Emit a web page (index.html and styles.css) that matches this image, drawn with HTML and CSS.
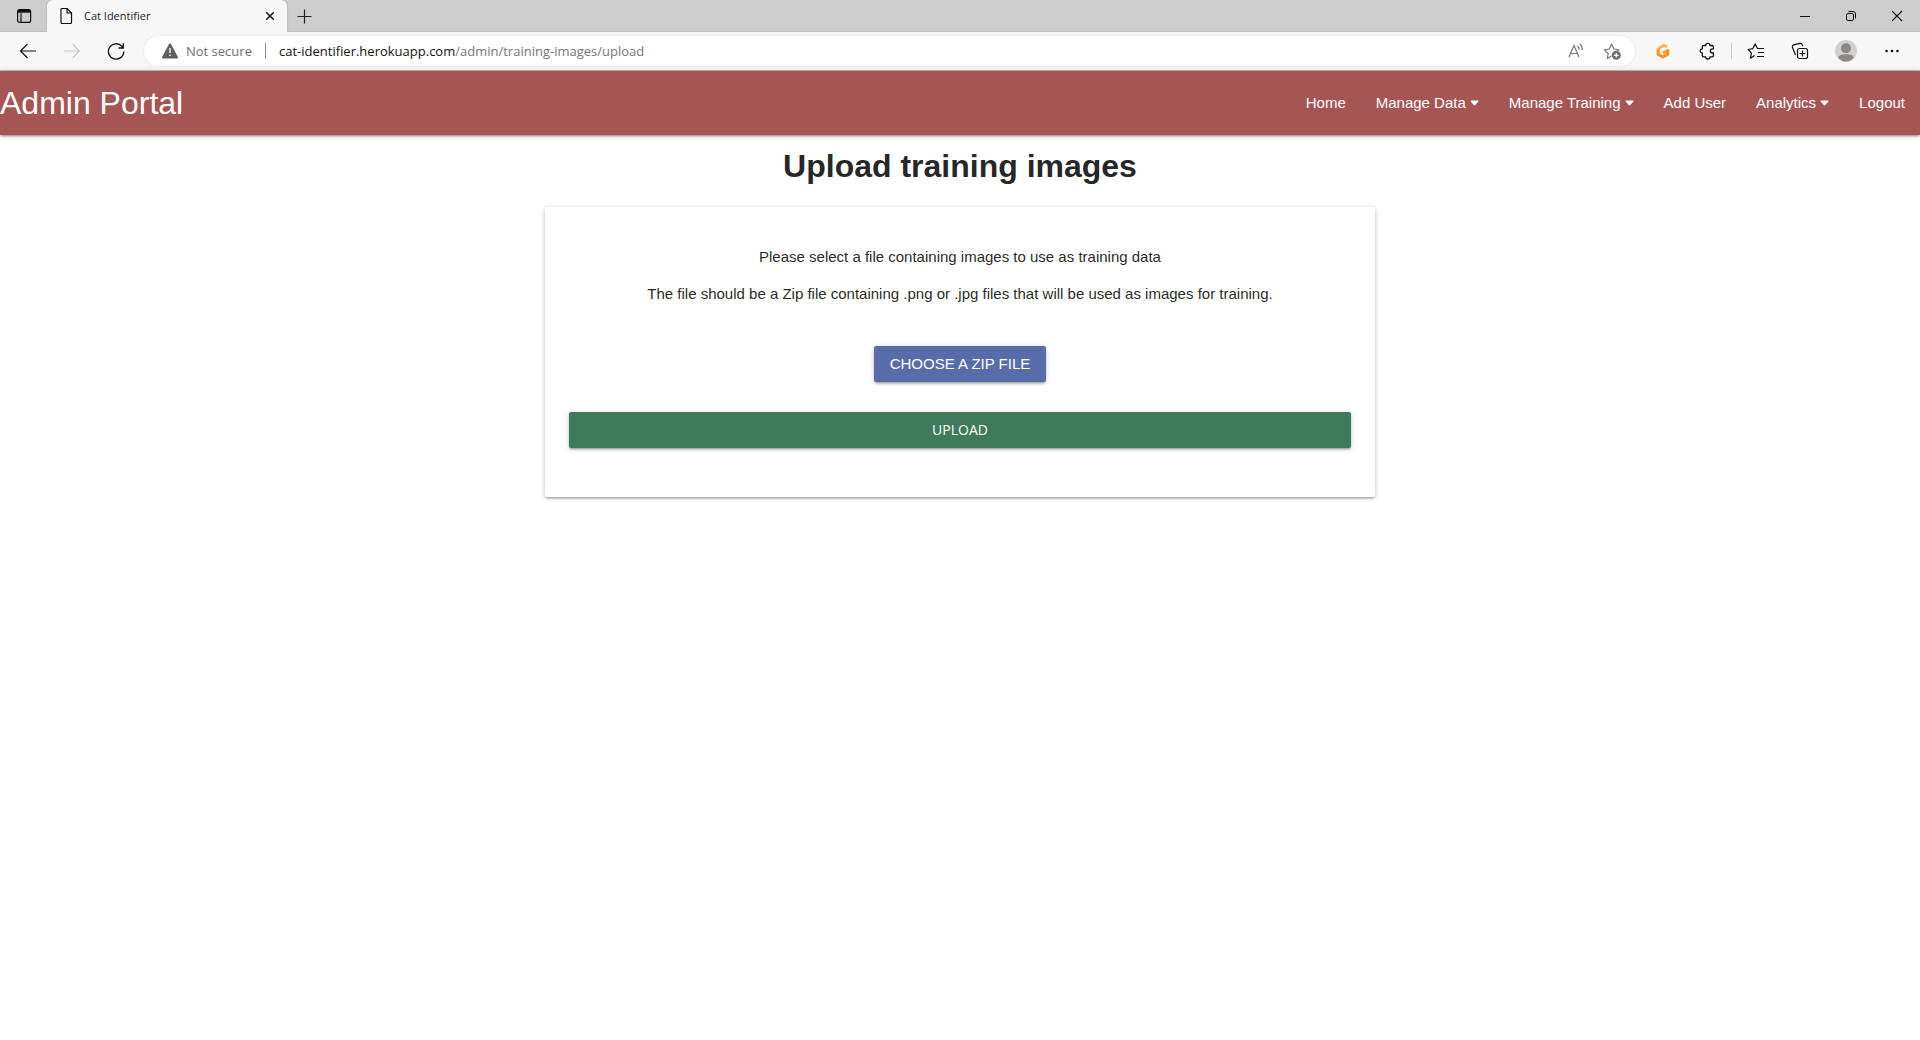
FILE: index.html
```html
<!DOCTYPE html>
<html lang="en">
<head>
<meta charset="utf-8">
<title>Cat Identifier</title>
<link rel="stylesheet" href="styles.css">
</head>
<body>
<div class="browser">
  <div class="tabstrip">
    <button class="tab-actions" type="button" aria-label="Tab actions menu">
      <svg width="16" height="16" viewBox="0 0 16 16" fill="none" stroke="#111" stroke-width="1.2"><rect x="1.6" y="1.6" width="13" height="12.8" rx="2"/><path d="M5 5v9.4" /><path d="M2 3.2h12" stroke-width="3"/></svg>
    </button>
    <div class="tab">
      <svg width="14" height="18" viewBox="0 0 14 18" fill="none" stroke="#111" stroke-width="1.2"><path d="M3 1.5h5.2L12.500 6v9.500a1 1 0 0 1-1 1H3a1 1 0 0 1-1-1v-13a1 1 0 0 1 1-1zM8 1.500V6h4.500"/></svg>
      <span class="tab-title">Cat Identifier</span>
      <button class="tab-close" type="button" aria-label="Close tab">
        <svg width="10" height="10" viewBox="0 0 10 10" stroke="#111" stroke-width="1.500"><path d="M1.200 1.200l7.600 7.600M8.800 1.200L1.200 8.800"/></svg>
      </button>
    </div>
    <button class="new-tab" type="button" aria-label="New tab">
      <svg width="16" height="16" viewBox="0 0 16 16" stroke="#222" stroke-width="1.2"><path d="M8.500 1.500v14M1.500 8.500h14"/></svg>
    </button>
    <div class="window-controls">
      <button class="window-button" type="button" aria-label="Minimize"><svg width="10" height="10" viewBox="0 0 10 10" stroke="#111"><path d="M0 5.500h10"/></svg></button>
      <button class="window-button" type="button" aria-label="Restore"><svg width="12" height="12" viewBox="0 0 12 12" fill="none" stroke="#111"><rect x="1.500" y="3.500" width="7" height="7" rx="1.500"/><path d="M3.500 1.500H8a2.500 2.500 0 0 1 2.500 2.500v4.500"/></svg></button>
      <button class="window-button" type="button" aria-label="Close"><svg width="12" height="12" viewBox="0 0 12 12" stroke="#111" stroke-width="1.100"><path d="M1 1l10 10M11 1L1 11"/></svg></button>
    </div>
  </div>
  <div class="toolbar">
    <button class="tool" type="button" aria-label="Back"><svg width="18" height="16" viewBox="0 0 18 16" fill="none" stroke="#111" stroke-width="1.200"><path d="M17 8H1.500M8.500 1L1.500 8l7 7"/></svg></button>
    <button class="tool" type="button" aria-label="Forward" disabled><svg width="18" height="16" viewBox="0 0 18 16" fill="none" stroke="#c8c8c8" stroke-width="1.200"><path d="M1 8h15.500M9.500 1l7 7-7 7"/></svg></button>
    <button class="tool" type="button" aria-label="Refresh"><svg width="18" height="18" viewBox="0 0 18 18" fill="none" stroke="#111" stroke-width="1.300"><path d="M16.800 9.500A7.700 7.700 0 1 1 14.800 4.300L16.300 6M16.300 1.200V6h-4.800"/></svg></button>
    <div class="address">
      <svg width="16" height="16" viewBox="0 0 16 16"><path fill="#5f5f5f" d="M8 .5a1.200 1.200 0 0 1 1.100.7l6.700 12.500a1.200 1.200 0 0 1-1.100 1.800H1.300A1.200 1.200 0 0 1 .2 13.700L6.900 1.200A1.200 1.200 0 0 1 8 .5z"/><path stroke="#fff" stroke-width="1.400" d="M8 5v5M8 11.400V13"/></svg>
      <span class="security">Not secure</span>
      <span class="address-rule"></span>
      <span class="url"><span class="url-host">cat-identifier.herokuapp.com</span>/admin/training-images/upload</span>
      <button class="address-tool" type="button" aria-label="Read aloud"><svg width="18" height="18" viewBox="0 0 18 18" fill="none" stroke="#777" stroke-width="1.200"><path d="M2 15L7 3.500 12 15M3.700 11.500h6.600M10.500 4c1.200 1 1.600 2.300 1.600 3.800M12.800 2c2 1.500 2.600 3.600 2.600 6"/></svg></button>
      <button class="address-tool" type="button" aria-label="Add to favorites"><svg width="18" height="18" viewBox="0 0 18 18" fill="none"><path stroke="#777" stroke-width="1.200" stroke-linejoin="round" d="M8.500 14L4.200 16.500l1-5L1.300 7.800l5-.8 2.200-5 2.400 5 5 .8-1.400 1.400"/><circle cx="13.300" cy="13.300" r="4.500" fill="#6e6e6e"/><path stroke="#fff" stroke-width="1.200" d="M13.300 11v4.600M11 13.300h4.600"/></svg></button>
    </div>
    <button class="tool" type="button" aria-label="G extension"><svg width="14" height="16" viewBox="0 0 14 16" fill="none" stroke-width="3" stroke-linejoin="round"><path stroke="#ffb35a" d="M11 3.600L8 2.300 2.200 5.800"/><path stroke="#ff9416" d="M2.200 5.500v5.800L7 13.800l4.800-2.500V7.500L7 10"/></svg></button>
    <button class="tool" type="button" aria-label="Extensions"><svg width="16" height="18" viewBox="0 0 16 18" fill="none" stroke="#111" stroke-width="1.300" stroke-linejoin="round"><path d="M4.500 3.500h2.200a2.100 2.100 0 0 1 4.200 0h2.300a1.200 1.200 0 0 1 1.200 1.200v2.100h-.9a2 2 0 0 0 0 4.200h.9v2.700a1.200 1.200 0 0 1-1.200 1.200h-2.300a2.100 2.100 0 0 1-4.200 0H4.500a1.200 1.200 0 0 1-1.200-1.200V11a2.100 2.100 0 0 1 0-4.200V4.700a1.200 1.200 0 0 1 1.200-1.200z"/></svg></button>
    <span class="toolbar-rule"></span>
    <button class="tool" type="button" aria-label="Favorites"><svg width="18" height="18" viewBox="0 0 18 18" fill="none" stroke="#111" stroke-width="1.200" stroke-linejoin="round"><path d="M7.500 13.500L3.500 16.200l.9-5L1.200 7.500l4.600-.8 2.300-4.800L10.500 6.500H17M11 10.500h6M10 14.500h7"/></svg></button>
    <button class="tool" type="button" aria-label="Collections"><svg width="18" height="18" viewBox="0 0 18 18" fill="none" stroke="#111" stroke-width="1.200"><path d="M4.500 13L1.500 5.500a2 2 0 0 1 1.200-2.600L9 1.400a2 2 0 0 1 2.300 1.200l.5 1.500"/><rect x="6.500" y="6.500" width="10" height="10" rx="2"/><path d="M11.500 8.500v6M8.500 11.500h6"/></svg></button>
    <button class="tool tool-profile" type="button" aria-label="Profile"><svg width="22" height="22" viewBox="0 0 22 22"><circle cx="11" cy="11" r="11" fill="#d2d0ce"/><g fill="#8a8886"><circle cx="11" cy="8.300" r="5"/><path d="M3.300 17.500c.7-2.200 3-3.300 7.700-3.300s7 1.100 7.700 3.300A10 10 0 0 1 11 21.500a10 10 0 0 1-7.700-4z"/></g></svg></button>
    <button class="tool tool-menu" type="button" aria-label="Settings and more"><svg width="14" height="4" viewBox="0 0 14 4" fill="#111"><circle cx="1.600" cy="2" r="1.300"/><circle cx="7" cy="2" r="1.300"/><circle cx="12.400" cy="2" r="1.300"/></svg></button>
  </div>
</div>

<header class="navbar">
  <a class="brand" href="#">Admin Portal</a>
  <nav class="nav-links">
    <a href="#">Home</a>
    <a href="#">Manage Data<svg class="caret" width="9" height="6" viewBox="0 0 9 6"><path d="M1 .5h7a.6.6 0 0 1 .4 1L5 5.300a.7.7 0 0 1-1 0L.6 1.500a.6.6 0 0 1 .4-1z"/></svg></a>
    <a href="#">Manage Training<svg class="caret" width="9" height="6" viewBox="0 0 9 6"><path d="M1 .5h7a.6.6 0 0 1 .4 1L5 5.300a.7.7 0 0 1-1 0L.6 1.500a.6.6 0 0 1 .4-1z"/></svg></a>
    <a href="#">Add User</a>
    <a href="#">Analytics<svg class="caret" width="9" height="6" viewBox="0 0 9 6"><path d="M1 .5h7a.6.6 0 0 1 .4 1L5 5.300a.7.7 0 0 1-1 0L.6 1.500a.6.6 0 0 1 .4-1z"/></svg></a>
    <a href="#">Logout</a>
  </nav>
</header>

<main class="container">
  <h1>Upload training images</h1>
  <div class="column">
    <form class="card">
      <p>Please select a file containing images to use as training data</p>
      <p>The file should be a Zip file containing .png or .jpg files that will be used as images for training.</p>
      <button class="btn btn-choose" type="button">CHOOSE A ZIP FILE</button>
      <button class="btn btn-upload" type="button">UPLOAD</button>
    </form>
  </div>
</main>
</body>
</html>
```
FILE: styles.css
```css
* {
  box-sizing: border-box;
}

body {
  min-height: 100vh;
  margin: 0;
  background: #fff;
  color: rgba(0, 0, 0, 0.87);
  font: 15px/22px "Liberation Sans", Arial, sans-serif;
}

a {
  color: inherit;
  text-decoration: none;
}

button {
  margin: 0;
  padding: 0;
  border: 0;
  background: none;
  color: inherit;
  font: inherit;
}

svg {
  display: block;
  flex: none;
}

/* Browser window */
.browser {
  font: 13px/18px "Open Sans", "Noto Sans", sans-serif;
}

.tabstrip {
  display: flex;
  height: 32px;
  background: #cdcdcd;
  box-shadow: inset 0 -1px #c0c0c0;
}

.tabstrip button,
.toolbar button {
  display: flex;
  align-items: center;
  justify-content: center;
}

.tab-actions {
  width: 47px;
}

.tab {
  display: flex;
  align-items: center;
  width: 240px;
  padding: 0 12px;
  border-radius: 6px 6px 0 0;
  background: #f7f7f7;
  box-shadow: 0 0 2px rgba(0, 0, 0, 0.25);
  clip-path: inset(0 -3px 0 -3px);
}

.tab-title {
  flex: 1;
  padding: 0 0 1px 11px;
  color: #222;
  font-size: 11px;
}

.tab-close {
  width: 10px;
}

.new-tab {
  width: 34px;
}

.window-controls {
  display: flex;
  margin-left: auto;
}

.window-button {
  width: 46px;
}

.toolbar {
  display: flex;
  align-items: center;
  height: 39px;
  padding: 0 6px;
  border-bottom: 1px solid #b9b9b9;
  background: #f7f7f7;
}

.tool {
  flex: none;
  width: 44px;
  height: 30px;
}

.address {
  display: flex;
  flex: 1;
  align-items: center;
  height: 30px;
  margin: 0 6px;
  padding: 0 5px 0 18px;
  border-radius: 15px;
  background: #fff;
  box-shadow: 0 0 3px rgba(0, 0, 0, 0.1);
}

.security {
  width: 78px;
  padding-left: 8px;
  color: #6e6e6e;
}

.address-rule {
  width: 1px;
  height: 16px;
  margin: 0 13px 0 9px;
  background: #8c8c8c;
}

.url {
  flex: 1;
  color: #767676;
}

.url-host {
  color: #111;
}

.address-tool {
  width: 36px;
  height: 30px;
}

.toolbar-rule {
  width: 1px;
  height: 16px;
  margin: 0 2px;
  background: #cfcfcf;
}

.tool-profile,
.tool-menu {
  margin-left: 2px;
}

/* Site navigation */
.navbar {
  display: flex;
  align-items: center;
  justify-content: space-between;
  height: 64px;
  background: #a65555;
  color: #fff;
  box-shadow: 0 2px 2px 0 rgba(0, 0, 0, 0.14), 0 3px 1px -2px rgba(0, 0, 0, 0.12), 0 1px 5px 0 rgba(0, 0, 0, 0.2);
}

.brand {
  font-size: 32px;
  line-height: 64px;
}

.nav-links {
  display: flex;
}

.nav-links a {
  display: flex;
  align-items: center;
  padding: 0 15px;
  line-height: 64px;
}

.caret {
  margin-left: 4px;
  fill: #fff;
}

/* Upload form */
.container {
  max-width: 1280px;
  margin: 0 auto;
}

h1 {
  margin: 13px 0 23px;
  font-size: 32px;
  line-height: 36px;
  font-weight: 700;
  text-align: center;
}

.column {
  width: calc(100% * 8 / 12);
  margin: 0 auto;
  padding: 0 12px;
}

.card {
  display: flex;
  flex-direction: column;
  align-items: center;
  padding: 39px 24px 49px;
  border-radius: 2px;
  background: #fff;
  text-align: center;
  box-shadow: 0 2px 2px 0 rgba(0, 0, 0, 0.14), 0 3px 1px -2px rgba(0, 0, 0, 0.12), 0 1px 5px 0 rgba(0, 0, 0, 0.2);
}

.card p {
  margin: 0 0 15px;
}

.btn {
  height: 36px;
  padding: 0 16px;
  border-radius: 2px;
  color: #fff;
  line-height: 36px;
  box-shadow: 0 2px 2px 0 rgba(0, 0, 0, 0.14), 0 3px 1px -2px rgba(0, 0, 0, 0.12), 0 1px 5px 0 rgba(0, 0, 0, 0.2);
}

.btn-choose {
  margin: 26px 0 30px;
  background: #576ca8;
}

.btn-upload {
  width: 100%;
  background: #3e7a5b;
  font-family: "Open Sans", "Noto Sans", sans-serif;
  font-size: 14px;
}
```
